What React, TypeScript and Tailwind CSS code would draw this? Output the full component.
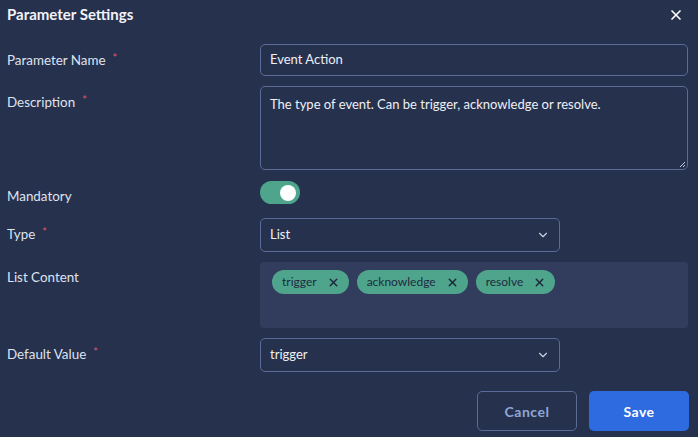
import { X, ChevronDown } from "lucide-react";

const TAGS = ["trigger", "acknowledge", "resolve"];

function Label({ text, required }: { text: string; required?: boolean }) {
  return (
    <div className="text-[13.4px] text-[#dfe3ee] flex items-start">
      {text}
      {required && <span className="text-[#e0566a] ml-[7px] text-[11px] leading-none mt-[2px]">*</span>}
    </div>
  );
}

export default function App() {
  return (
    <div className="w-[698px] h-[437px] bg-[#26314e] text-white overflow-hidden" style={{ fontFamily: "Lato, sans-serif" }}>
      {/* Header */}
      <div className="flex items-center justify-between pl-[7px] pr-[14px] h-[29px]">
        <h1 className="text-[15px] font-bold text-[#f1f3f8]">Parameter Settings</h1>
        <X className="w-[16px] h-[16px] text-white" strokeWidth={2.5} />
      </div>

      <div className="grid grid-cols-[253px_428px] gap-x-0 pl-[7px] mt-[15px]">
        {/* Parameter Name */}
        <div className="pt-[6px]"><Label text="Parameter Name" required /></div>
        <div className="h-[32px] rounded-[5px] border border-[#5b6a97] flex items-center px-[9px] text-[13px] text-[#eef0f6]">
          Event Action
        </div>

        {/* Description */}
        <div className="pt-[6px] mt-[10px]"><Label text="Description" required /></div>
        <div className="mt-[10px] h-[84px] rounded-[5px] border border-[#5b6a97] px-[9px] pt-[8px] text-[13px] text-[#eef0f6] relative">
          The type of event. Can be trigger, acknowledge or resolve.
          <svg className="absolute right-[1px] bottom-[1px]" width="8" height="8" viewBox="0 0 8 8">
            <path d="M7 2 L2 7 M7 5 L5 7" stroke="#c8cedd" strokeWidth="1" />
          </svg>
        </div>

        {/* Mandatory */}
        <div className="mt-[16px]"><Label text="Mandatory" /></div>
        <div className="mt-[11px]">
          <div className="w-[40px] h-[23px] rounded-full bg-[#4ea58c] flex items-center justify-end pr-[4px]">
            <div className="w-[16px] h-[16px] rounded-full bg-white" />
          </div>
        </div>

        {/* Type */}
        <div className="mt-[12px] pt-[6px]"><Label text="Type" required /></div>
        <div className="mt-[12px] w-[300px] h-[34px] rounded-[5px] border border-[#5b6a97] flex items-center justify-between px-[9px] text-[13px] text-[#eef0f6]">
          List
          <ChevronDown className="w-[14px] h-[14px] text-[#c8cedd]" strokeWidth={2} />
        </div>

        {/* List Content */}
        <div className="mt-[10px] pt-[5px]"><Label text="List Content" /></div>
        <div className="mt-[10px] h-[66px] rounded-[4px] bg-[#323d5e] px-[12px] pt-[8px] flex items-start gap-[8px]">
          {TAGS.map((t) => (
            <div key={t} className="h-[24px] rounded-full bg-[#4ea58c] flex items-center pl-[10px] pr-[9px] gap-[10px] text-[12px] text-[#1f2a3e]">
              {t}
              <X className="w-[13px] h-[13px] text-[#1a2436]" strokeWidth={2.5} />
            </div>
          ))}
        </div>

        {/* Default Value */}
        <div className="mt-[10px] pt-[6px]"><Label text="Default Value" required /></div>
        <div className="mt-[10px] w-[300px] h-[34px] rounded-[5px] border border-[#5b6a97] flex items-center justify-between px-[9px] text-[13px] text-[#eef0f6]">
          trigger
          <ChevronDown className="w-[14px] h-[14px] text-[#c8cedd]" strokeWidth={2} />
        </div>
      </div>

      {/* Footer */}
      <div className="flex justify-end gap-[12px] pr-[9px] mt-[19px]">
        <button className="w-[100px] h-[40px] rounded-[5px] border border-[#5b6a97] text-[14px] font-bold text-[#8fa6d6] tracking-[0.5px]">
          Cancel
        </button>
        <button className="w-[100px] h-[40px] rounded-[5px] bg-[#2e6ae0] text-[14px] font-bold text-white tracking-[0.5px]">
          Save
        </button>
      </div>
    </div>
  );
}
